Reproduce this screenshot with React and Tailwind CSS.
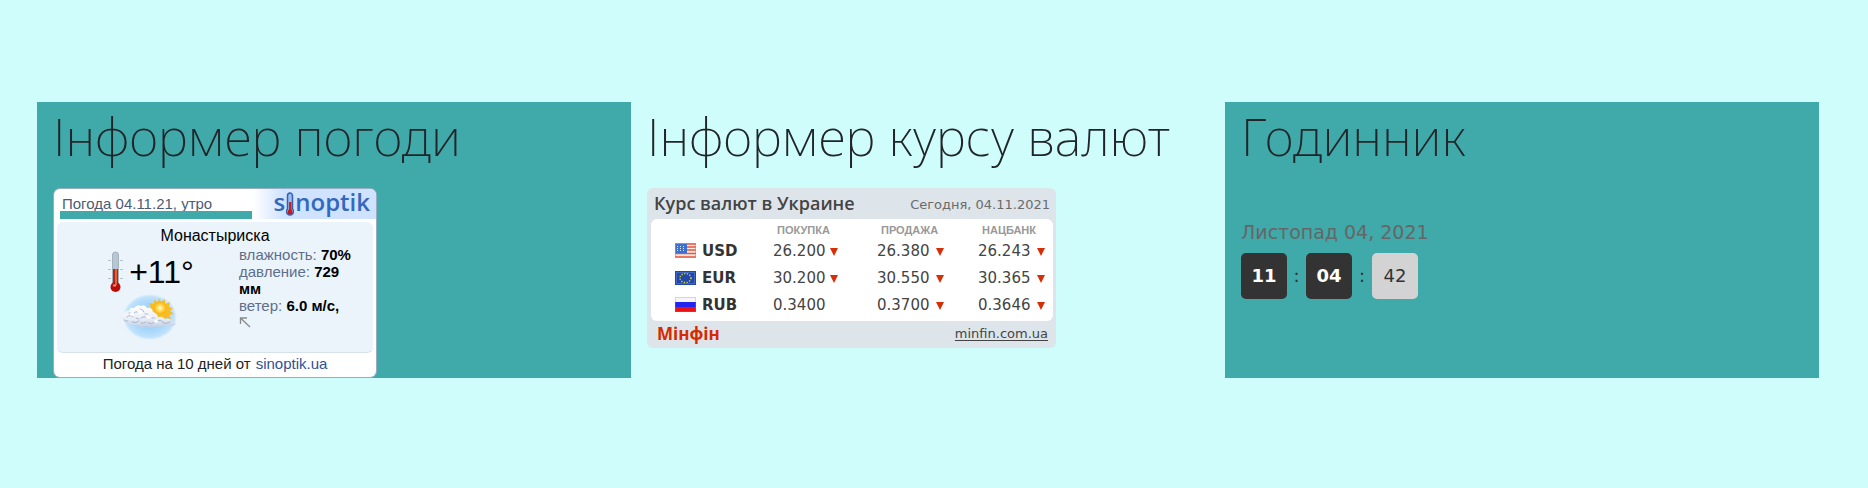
const display = "font-['Noto_Sans',sans-serif] text-[51px] leading-[68px] font-extralight text-[#212529] whitespace-nowrap";
const verdana = "font-['DejaVu_Sans',sans-serif]";

function Thermometer() {
  return (
    <svg width="15" height="42" viewBox="0 0 15 42" aria-hidden="true">
      <path d="M0 9.500h3M12 9.500h3M0 18.500h3M12 18.500h3M0 27.500h3M12 27.500h3" stroke="#b9c1cb" />
      <rect x="4.500" y="1" width="6" height="34" rx="3" fill="#b7c6d3" stroke="#a3b2bf" />
      <rect x="5" y="18" width="5" height="18" fill="#b3241a" />
      <circle cx="7.500" cy="36" r="5" fill="#b80d08" />
      <rect x="7" y="18" width="2" height="16" fill="#e8602c" />
      <ellipse cx="6.500" cy="34.500" rx="1.600" ry="1.200" fill="#e88a7a" />
    </svg>
  );
}

function PartlyCloudy() {
  return (
    <svg width="58" height="48" viewBox="0 0 58 48" aria-hidden="true">
      <defs>
        <radialGradient id="sky">
          <stop offset="0" stopColor="#8fc9fb" />
          <stop offset="0.6" stopColor="#a9d7fb" />
          <stop offset="0.88" stopColor="#bfe2fb" />
          <stop offset="1" stopColor="#ebf3fb" />
        </radialGradient>
        <radialGradient id="sun">
          <stop offset="0" stopColor="#fffbe0" />
          <stop offset="0.5" stopColor="#ffd94a" />
          <stop offset="1" stopColor="#f8ae10" />
        </radialGradient>
        <linearGradient id="cloud" x1="0" y1="0" x2="0" y2="1">
          <stop offset="0" stopColor="#ffffff" />
          <stop offset="0.6" stopColor="#e9edf5" />
          <stop offset="1" stopColor="#bccbe0" />
        </linearGradient>
      </defs>
      <ellipse cx="31" cy="24" rx="27" ry="23" fill="url(#sky)" />
      <path
        d="M40 5l2 4 4-3 0 5 5-2-1 5 4 1-3 3 4 3-5 1 2 4-5-1-1 4-4-3-3 4-2-4-5 2 1-5-5-1 3-3-4-3 5-1-2-5 5 1 0-4 4 2z"
        fill="#f8bd26"
      />
      <circle cx="41" cy="15" r="6.500" fill="url(#sun)" />
      <path
        d="M1 22q2-3 5-2 1-3 4-2 1-4 5-3 3-4 7-2 4-2 6 2 5-1 6 4 4 1 5 5 5-1 7 2 6-1 7 3 5 0 3 3-5 2-10 0-4 4-9 1-5 4-10 0-5 3-9-1-5 2-8-2-6 0-5-4-4-1-4-4z"
        fill="url(#cloud)"
      />
      <g fill="none" stroke="#9dadc9" strokeWidth="1" strokeLinecap="round" opacity="0.85">
        <path d="M8 24q3-3 6 0M15 20q3-3 6 1M22 25q4-3 7 1M13 29q4 2 7-1M29 30q4 2 7-1M38 28q4-2 6 1M21 16q3 0 4 3M5 27q2 2 4 1M17 25l3 1M26 21q3-1 4 2M33 25q3-1 4 2M22 30q3 1 5-1M44 30q4 1 7-1M10 20l3 0" />
      </g>
      <g fill="#fff" opacity="0.9">
        <circle cx="13" cy="21" r="2" />
        <circle cx="21" cy="19" r="2.500" />
        <circle cx="29" cy="24" r="2" />
        <circle cx="37" cy="28" r="2" />
      </g>
    </svg>
  );
}

function LogoThermometer() {
  return (
    <svg width="8" height="25" viewBox="0 0 8 25" className="shrink-0" aria-hidden="true">
      <path d="M1.500 17V4a2.500 3 0 0 1 5 0v13a3.500 3.500 0 1 1-5 0z" fill="#9fbce8" stroke="#2f62b5" strokeWidth="1.500" />
      <rect x="3" y="10" width="2.500" height="9" fill="#d01f1f" />
      <circle cx="4" cy="20" r="2.500" fill="#c8161a" />
    </svg>
  );
}

function WeatherInformer() {
  return (
    <div className="w-[322px] rounded-[6px] bg-white font-['Liberation_Sans',sans-serif] text-[15px] leading-[17px] shadow-[0_0_0_1px_#98aec0]">
      <div className="flex h-[30px]">
        <div className="flex w-[199px] flex-col pt-[6px] pr-[1px] pl-[6px]">
          <div className="h-[16px] pl-[2px] text-[#4c5c78]">Погода 04.11.21, утро</div>
          <div className="h-[8px] bg-[#40a9aa]" />
        </div>
        <a
          href="#sinoptik"
          aria-label="sinoptik"
          className="flex flex-1 items-start justify-end gap-[1px] rounded-tr-[6px] bg-linear-to-r from-white to-[#cfe2ff] to-25% pr-[6px] font-['Open_Sans',sans-serif] text-[24px] leading-[26px] font-semibold text-[#3368bd]"
        >
          <span>s</span>
          <span className="pt-[3px]"><LogoThermometer /></span>
          <span>noptik</span>
        </a>
      </div>
      <div className="mx-[3px] mt-[3px] h-[131px] rounded-[6px] border-b border-[#d5e2ec] bg-[#ebf3fb] pt-[5px]">
        <div className="text-center text-[16px] text-black">Монастыриска</div>
        <div className="flex pt-[2px]">
          <div className="flex w-[182px] flex-col items-center pt-[5px]">
            <div className="flex items-center gap-[6px] pl-[6px]">
              <Thermometer />
              <span className="text-[32px] leading-[36px] text-black">+11°</span>
            </div>
            <PartlyCloudy />
          </div>
          <div className="w-[125px] text-[#5d6f8c] [&_b]:text-black">
            <div>влажность: <b>70%</b></div>
            <div>давление: <b>729 мм</b></div>
            <div>ветер: <b>6.0 м/с,</b></div>
            <svg width="12" height="14" viewBox="0 0 12 14" fill="none" stroke="#8a8a8a" strokeWidth="1.300" aria-hidden="true">
              <path d="M1.500 10V4H8M1.500 4L11 13" />
            </svg>
          </div>
        </div>
      </div>
      <div className="flex h-[24px] items-center justify-center gap-[5px] pb-[4px] text-[#222]">
        Погода на 10 дней от <a href="#sinoptik" className="text-[#2f5199]">sinoptik.ua</a>
      </div>
    </div>
  );
}

function FlagUS() {
  return (
    <svg width="21" height="15" viewBox="0 0 21 15" aria-hidden="true">
      <rect width="21" height="15" fill="#fbe9e4" />
      <path d="M0 1h21M0 4h21M0 7h21M0 10.500h21M0 14h21" stroke="#e4563f" strokeWidth="1.500" />
      <rect width="12" height="9" y="1" fill="#3d6fcf" />
      <g fill="#dfe9fb">
        {[2, 5, 8].map((x) => [3, 5, 7].map((y) => <rect key={`${x}-${y}`} x={x} y={y} width="1" height="1" />))}
      </g>
      <rect x="0.500" y="0.500" width="20" height="14" fill="none" stroke="#c9836f" strokeOpacity="0.6" />
    </svg>
  );
}

function FlagEU() {
  return (
    <svg width="21" height="14" viewBox="0 0 21 14" aria-hidden="true">
      <rect width="21" height="14" fill="#2347a8" />
      <rect x="1.500" y="1.500" width="18" height="11" fill="none" stroke="#4169c4" />
      <ellipse cx="10.500" cy="7" rx="5.500" ry="4.500" fill="none" stroke="#c9cf3e" strokeWidth="1.500" strokeDasharray="1.300 1.400" />
    </svg>
  );
}

function FlagRU() {
  return (
    <svg width="21" height="15" viewBox="0 0 21 15" aria-hidden="true">
      <rect width="21" height="5" fill="#f4f5f8" />
      <rect y="5" width="21" height="5" fill="#2424f0" />
      <rect y="10" width="21" height="5" fill="#ea1212" />
      <rect x="0.500" y="0.500" width="20" height="14" fill="none" stroke="#88a" strokeOpacity="0.3" />
    </svg>
  );
}

function Rate({ value, down = true, gap = "gap-[6px]" }) {
  return (
    <td className="p-0">
      <span className={`flex items-center ${gap}`}>
        {value}
        {down && (
          <svg width="8" height="8" viewBox="0 0 8 8" className="mt-[3px]" aria-hidden="true">
            <path d="M0 0h8L4 8z" fill="#d62f08" />
          </svg>
        )}
      </span>
    </td>
  );
}

const rates = [
  { code: "USD", Flag: FlagUS, buy: "26.200", sell: "26.380", bank: "26.243" },
  { code: "EUR", Flag: FlagEU, buy: "30.200", sell: "30.550", bank: "30.365" },
  { code: "RUB", Flag: FlagRU, buy: "0.3400", sell: "0.3700", bank: "0.3646", buyFlat: true },
];

function CurrencyInformer() {
  return (
    <div className={`w-[409px] rounded-[6px] bg-[#dde4ea] ${verdana}`}>
      <div className="flex h-[31px] items-center justify-between pr-[6px] pl-[7px]">
        <h2 className="font-['Open_Sans',sans-serif] text-[18px] font-semibold text-[#444]">Курс валют в Украине</h2>
        <span className="pt-[3px] text-[13px] text-[#6b6b6b]">Сегодня, 04.11.2021</span>
      </div>
      <div className="mr-[3px] ml-[4px] h-[102px] rounded-[6px] bg-white pl-[24px]">
        <table className="w-full table-fixed border-collapse text-left text-[15px] leading-[20px] text-[#444]">
          <colgroup>
            <col className="w-[98px]" />
            <col className="w-[104px]" />
            <col className="w-[101px]" />
            <col />
          </colgroup>
          <thead>
            <tr className="h-[18px] font-['Liberation_Sans',sans-serif] text-[11px] leading-[14px] text-[#999]">
              <th className="p-0" aria-label="Валюта" />
              <th className="p-0 pt-[4px] pl-[4px] font-bold">ПОКУПКА</th>
              <th className="p-0 pt-[4px] pl-[4px] font-bold">ПРОДАЖА</th>
              <th className="p-0 pt-[4px] pl-[4px] font-bold">НАЦБАНК</th>
            </tr>
          </thead>
          <tbody>
            {rates.map(({ code, Flag, buy, sell, bank, buyFlat }) => (
              <tr key={code} className="h-[27px]">
                <th scope="row" className="p-0 font-bold text-[#333]">
                  <span className="flex items-center gap-[6px]"><Flag />{code}</span>
                </th>
                <Rate value={buy} down={!buyFlat} gap="gap-[4px]" />
                <Rate value={sell} />
                <Rate value={bank} />
              </tr>
            ))}
          </tbody>
        </table>
      </div>
      <div className="flex h-[27px] items-center justify-between pr-[8px] pb-[1px] pl-[10px]">
        <span className="font-['Open_Sans',sans-serif] text-[17px] font-bold text-[#d62a00]">Мінфін</span>
        <a href="#minfin" className="text-[13px] text-[#444] underline underline-offset-2">minfin.com.ua</a>
      </div>
    </div>
  );
}

function Clock() {
  const box = "flex size-[46px] items-center justify-center rounded-[5px]";
  return (
    <div className={`pt-[50px] text-[18px] leading-[24px] ${verdana}`}>
      <div className="text-[19px] text-[#666]">Листопад 04, 2021</div>
      <div className="mt-[9px] flex items-center text-[#333]">
        <span className={`${box} bg-[#333] font-bold text-white`}>11</span>
        <span className="w-[19px] text-center">:</span>
        <span className={`${box} bg-[#333] font-bold text-white`}>04</span>
        <span className="w-[20px] text-center">:</span>
        <span className={`${box} bg-[#d3d3d3]`}>42</span>
      </div>
    </div>
  );
}

export default function App() {
  return (
    <main className="min-h-screen bg-[#cffdfb] pt-[102px] pr-[49px] pl-[37px]">
      <div className="grid grid-cols-3">
        <section className="bg-[#40a9aa] px-[16px] pb-[1px]">
          <h1 className={display}>Інформер погоди</h1>
          <div className="pt-[19px] pl-[1px]"><WeatherInformer /></div>
        </section>
        <section className="px-[16px]">
          <h1 className={display}>Інформер курсу валют</h1>
          <div className="pt-[18px]"><CurrencyInformer /></div>
        </section>
        <section className="bg-[#40a9aa] px-[16px]">
          <h1 className={display}>Годинник</h1>
          <Clock />
        </section>
      </div>
    </main>
  );
}
